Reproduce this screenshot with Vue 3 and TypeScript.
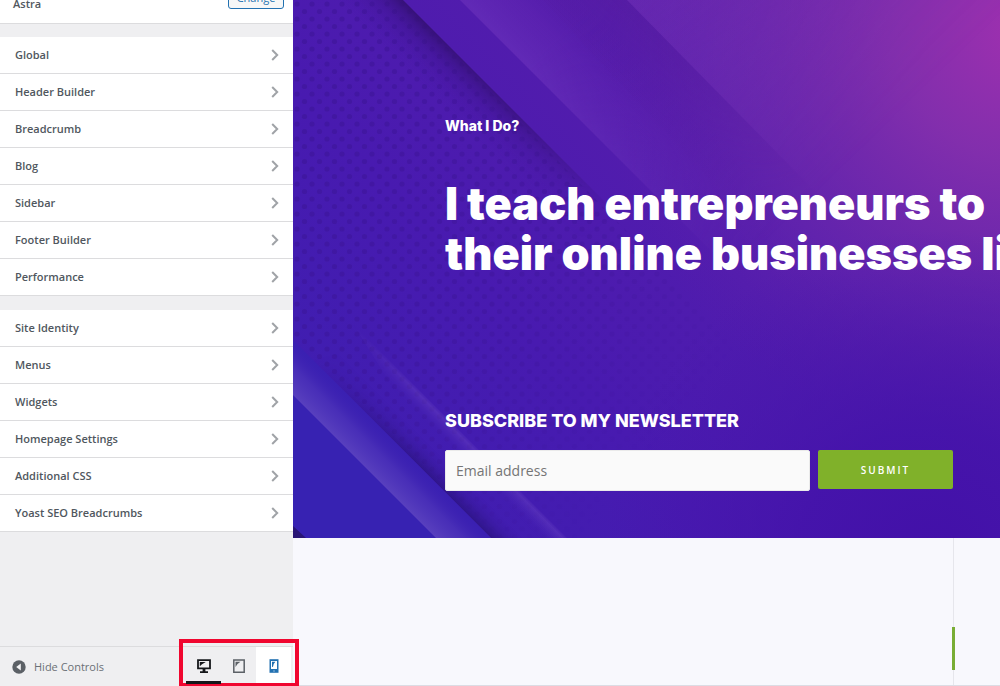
<script setup lang="ts">
import { ref } from 'vue'

const groups: string[][] = [
  ['Global', 'Header Builder', 'Breadcrumb', 'Blog', 'Sidebar', 'Footer Builder', 'Performance'],
  ['Site Identity', 'Menus', 'Widgets', 'Homepage Settings', 'Additional CSS', 'Yoast SEO Breadcrumbs'],
]

const email = ref('')
</script>

<template>
  <div class="customizer">
    <aside class="sidebar">
      <header class="theme">
        <span class="theme-name">Astra</span>
        <button class="change" type="button">Change</button>
      </header>

      <nav class="panels" aria-label="Customizer sections">
        <ul v-for="(group, g) in groups" :key="g" class="group">
          <li v-for="name in group" :key="name">
            <button class="row" type="button">
              <span>{{ name }}</span>
              <svg class="chevron" viewBox="0 0 8 12" aria-hidden="true">
                <path d="M1.2 1 6.2 6l-5 5" fill="none" stroke="#a0a3a7" stroke-width="2" />
              </svg>
            </button>
          </li>
        </ul>
      </nav>

      <footer class="footer">
        <button class="collapse" type="button">
          <svg class="collapse-icon" viewBox="0 0 14 14" aria-hidden="true">
            <circle cx="7" cy="7" r="6.7" fill="#5b6066" />
            <path d="M8.8 3.6v6.8L4.2 7z" fill="#f3f3f5" />
          </svg>
          <span>Hide Controls</span>
        </button>
        <div class="devices">
          <button class="device active" type="button" aria-label="Desktop preview">
            <svg class="device-icon" viewBox="0 0 16 16" aria-hidden="true">
              <path d="M2 2.2h12v8.2H2z" fill="none" stroke="#15171a" stroke-width="1.8" />
              <path d="M3.8 4h6L6 6.2l-2.200 2z" fill="#15171a" />
              <path d="M6.600 11h2.800v2.200H12V15H4v-1.800h2.600z" fill="#15171a" />
            </svg>
          </button>
          <button class="device" type="button" aria-label="Tablet preview">
            <svg class="device-icon" viewBox="0 0 16 16" aria-hidden="true">
              <path d="M2.800 2h10.400v12.200H2.800z" fill="none" stroke="#5b6066" stroke-width="1.500" />
              <path d="M4.500 3.800h5L6.500 6l-2 3z" fill="#5b6066" />
            </svg>
          </button>
          <button class="device hover" type="button" aria-label="Mobile preview">
            <svg class="device-icon" viewBox="0 0 16 16" aria-hidden="true">
              <path d="M3.500 1.200h9v13.600h-9z" fill="#2271b1" />
              <path d="M5 3h6v8H5z" fill="#fff" />
              <path d="M6 3.800h3.400L7.700 6 7 8.800 6 9z" fill="#2271b1" />
              <path d="M7 12.600h2v1H7z" fill="#8bb6dc" />
            </svg>
          </button>
          <div class="highlight" aria-hidden="true"></div>
        </div>
      </footer>
    </aside>

    <main class="preview">
      <section class="hero">
        <svg class="art" viewBox="0 0 707 538" preserveAspectRatio="xMinYMin slice" aria-hidden="true">
          <defs>
            <linearGradient id="base" gradientUnits="userSpaceOnUse" x1="0" y1="538" x2="560" y2="0">
              <stop offset="0" stop-color="#3a20b1" />
              <stop offset="0.400" stop-color="#481ab0" />
              <stop offset="1" stop-color="#5e1fa9" />
            </linearGradient>
            <radialGradient id="glow" gradientUnits="userSpaceOnUse" cx="730" cy="30" r="430">
              <stop offset="0" stop-color="#9f30af" />
              <stop offset="0.300" stop-color="#8630ad" stop-opacity="0.900" />
              <stop offset="0.700" stop-color="#702bae" stop-opacity="0.400" />
              <stop offset="1" stop-color="#5a1cab" stop-opacity="0" />
            </radialGradient>
            <radialGradient id="low" gradientUnits="userSpaceOnUse" cx="640" cy="560" r="330">
              <stop offset="0" stop-color="#4210a8" />
              <stop offset="0.400" stop-color="#4312aa" stop-opacity="0.800" />
              <stop offset="1" stop-color="#4615ac" stop-opacity="0" />
            </radialGradient>
            <pattern id="dots" width="15" height="15" patternUnits="userSpaceOnUse">
              <circle cx="4" cy="4" r="2.600" fill="#38128c" />
              <circle cx="11.500" cy="11.500" r="2.600" fill="#38128c" />
            </pattern>
            <linearGradient id="dotFade" gradientUnits="userSpaceOnUse" x1="60" y1="120" x2="400" y2="400">
              <stop offset="0" stop-color="#fff" stop-opacity="0.380" />
              <stop offset="0.500" stop-color="#fff" stop-opacity="0.280" />
              <stop offset="1" stop-color="#fff" stop-opacity="0" />
            </linearGradient>
            <mask id="dotMask"><rect width="707" height="538" fill="url(#dotFade)" /></mask>
            <linearGradient id="shade" gradientUnits="userSpaceOnUse" x1="180" y1="70" x2="148" y2="102">
              <stop offset="0" stop-color="#32106f" stop-opacity="0.850" />
              <stop offset="0.400" stop-color="#3a1288" stop-opacity="0.400" />
              <stop offset="1" stop-color="#4517a5" stop-opacity="0" />
            </linearGradient>
            <linearGradient id="along" gradientUnits="userSpaceOnUse" x1="130" y1="20" x2="320" y2="215">
              <stop offset="0" stop-color="#fff" />
              <stop offset="0.500" stop-color="#fff" stop-opacity="0.700" />
              <stop offset="1" stop-color="#fff" stop-opacity="0" />
            </linearGradient>
            <mask id="alongMask"><rect width="707" height="538" fill="url(#along)" /></mask>
            <linearGradient id="bandA" gradientUnits="userSpaceOnUse" x1="217" y1="50" x2="277" y2="-10">
              <stop offset="0" stop-color="#7b3fc4" stop-opacity="0.400" />
              <stop offset="0.500" stop-color="#6c2db8" stop-opacity="0.300" />
              <stop offset="1" stop-color="#5a1ca3" stop-opacity="0" />
            </linearGradient>
            <linearGradient id="bandB" gradientUnits="userSpaceOnUse" x1="384" y1="50" x2="324" y2="110">
              <stop offset="0" stop-color="#541b9c" stop-opacity="0.500" />
              <stop offset="1" stop-color="#561ba2" stop-opacity="0" />
            </linearGradient>
            <linearGradient id="bandC" gradientUnits="userSpaceOnUse" x1="384" y1="50" x2="520" y2="-80">
              <stop offset="0" stop-color="#8440bc" stop-opacity="0.320" />
              <stop offset="1" stop-color="#8737b4" stop-opacity="0.200" />
            </linearGradient>
            <linearGradient id="fade" gradientUnits="userSpaceOnUse" x1="300" y1="0" x2="540" y2="250">
              <stop offset="0" stop-color="#fff" />
              <stop offset="0.400" stop-color="#fff" stop-opacity="0.600" />
              <stop offset="0.850" stop-color="#fff" stop-opacity="0" />
            </linearGradient>
            <mask id="fadeMask"><rect width="707" height="538" fill="url(#fade)" /></mask>
            <linearGradient id="ray" gradientUnits="userSpaceOnUse" x1="72" y1="467" x2="100" y2="439">
              <stop offset="0" stop-color="#654dc3" stop-opacity="0.700" />
              <stop offset="0.500" stop-color="#5a40be" stop-opacity="0.450" />
              <stop offset="1" stop-color="#3d1fb0" stop-opacity="0" />
            </linearGradient>
            <linearGradient id="rayShade" gradientUnits="userSpaceOnUse" x1="110" y1="450" x2="126" y2="434">
              <stop offset="0" stop-color="#241070" stop-opacity="0.600" />
              <stop offset="1" stop-color="#3a1aa0" stop-opacity="0" />
            </linearGradient>
            <linearGradient id="rayAlong" gradientUnits="userSpaceOnUse" x1="20" y1="360" x2="130" y2="470">
              <stop offset="0" stop-color="#fff" stop-opacity="0" />
              <stop offset="1" stop-color="#fff" />
            </linearGradient>
            <mask id="rayMask"><rect width="707" height="538" fill="url(#rayAlong)" /></mask>
            <linearGradient id="thin" gradientUnits="userSpaceOnUse" x1="148" y1="440" x2="162" y2="426">
              <stop offset="0" stop-color="#3f1bb0" stop-opacity="0" />
              <stop offset="0.850" stop-color="#7650cc" stop-opacity="0.340" />
              <stop offset="1" stop-color="#6a40c4" stop-opacity="0.160" />
            </linearGradient>
            <linearGradient id="thinAlong" gradientUnits="userSpaceOnUse" x1="55" y1="325" x2="125" y2="395">
              <stop offset="0" stop-color="#fff" stop-opacity="0" />
              <stop offset="1" stop-color="#fff" />
            </linearGradient>
            <mask id="thinMask"><rect width="707" height="538" fill="url(#thinAlong)" /></mask>
          </defs>
          <rect width="707" height="538" fill="url(#base)" />
          <rect width="707" height="538" fill="url(#glow)" />
          <rect width="707" height="538" fill="url(#low)" />
          <path d="M0 0H108L430 330 640 538H0z" fill="url(#dots)" mask="url(#dotMask)" />
          <path d="M40 0H110L330 220 290 260z" fill="url(#shade)" mask="url(#alongMask)" />
          <g mask="url(#fadeMask)">
            <path d="M167 0H334L560 240 430 263z" fill="url(#bandA)" />
            <path d="M250 0H334L600 270 510 280z" fill="url(#bandB)" />
            <path d="M334 0H707V380z" fill="url(#bandC)" />
          </g>
          <path d="M60 324 274 538H228L120 420z" fill="url(#thin)" mask="url(#thinMask)" />
          <path d="M20 360 198 538H250L60 350z" fill="url(#rayShade)" mask="url(#rayMask)" />
          <path d="M0 340 198 538H0z" fill="#3a20b2" />
          <path d="M0 395 143 538H0z" fill="#3722b2" />
          <path d="M0 395V340L198 538H143z" fill="url(#ray)" />
          <path d="M0 526 13 538H0z" fill="#291575" />
        </svg>
        <div class="content">
          <p class="eyebrow">What I Do?</p>
          <h1 class="headline">I teach entrepreneurs to<br />their online businesses li</h1>
          <h2 class="subscribe">SUBSCRIBE TO MY NEWSLETTER</h2>
          <form class="form" @submit.prevent>
            <input v-model="email" class="email" type="email" placeholder="Email address" aria-label="Email address" />
            <button class="submit" type="submit">SUBMIT</button>
          </form>
        </div>
      </section>
      <section class="below">
        <div class="column"><span class="marker"></span></div>
      </section>
    </main>
  </div>
</template>

<style>
body {
  margin: 0;
}
</style>

<style scoped>
.customizer {
  display: flex;
  min-height: 100vh;
  overflow: hidden;
  font-family: "Open Sans", "Noto Sans", sans-serif;
  background: #f8f8fd;
}

button {
  font-family: inherit;
  cursor: pointer;
}

.sidebar {
  display: flex;
  flex-direction: column;
  flex: none;
  box-sizing: border-box;
  width: 18%;
  min-width: 293px;
  background: #efeff1;
  color: #50575e;
}

.theme {
  display: flex;
  align-items: flex-end;
  justify-content: space-between;
  box-sizing: border-box;
  height: 24px;
  padding: 0 9px 14px 13px;
  overflow: hidden;
  background: #fff;
  border-bottom: 1px solid #dcdcde;
}

.theme-name {
  font-size: 11px;
  line-height: 18px;
  font-weight: 600;
  margin-bottom: -4px;
}

.change {
  flex: none;
  width: 56px;
  height: 22px;
  padding: 0;
  font-size: 11px;
  line-height: 20px;
  color: #2271b1;
  background: #f6f7f7;
  border: 1px solid #2271b1;
  border-radius: 3px;
}

.panels {
  display: flex;
  flex-direction: column;
  gap: 14px;
  padding-top: 13px;
}

.group {
  margin: 0;
  padding: 0;
  list-style: none;
  background: #fff;
}

.row {
  display: flex;
  align-items: center;
  justify-content: space-between;
  width: 100%;
  height: 37px;
  padding: 0 14px 0 15px;
  font-size: 11px;
  font-weight: 600;
  line-height: 18px;
  color: #50575e;
  text-align: left;
  background: #fff;
  border: 0;
  border-bottom: 1px solid #dcdcde;
}

.chevron {
  width: 8px;
  height: 12px;
}

.footer {
  display: flex;
  justify-content: space-between;
  height: 39px;
  margin-top: auto;
  border-top: 1px solid #dcdcde;
}

.collapse {
  display: flex;
  align-items: center;
  gap: 8px;
  padding: 0 0 0 12px;
  font-size: 11px;
  color: #6b7076;
  background: none;
  border: 0;
}

.collapse-icon {
  width: 14px;
  height: 14px;
}

.devices {
  position: relative;
  display: flex;
  padding: 0 2px 2px 0;
}

.device {
  display: flex;
  align-items: center;
  justify-content: center;
  box-sizing: border-box;
  width: 35px;
  padding: 4px 0 0;
  background: none;
  border: 0;
  border-bottom: 3px solid transparent;
}

.device.active {
  position: relative;
  z-index: 1;
  border-bottom-color: #15171a;
}

.device.hover {
  background: #fff;
}

.device-icon {
  width: 16px;
  height: 16px;
}

.highlight {
  position: absolute;
  inset: -8px -6px -1px -7px;
  border: 4px solid #f0062f;
  pointer-events: none;
}

.preview {
  display: flex;
  flex: 1;
  flex-direction: column;
  min-width: 0;
  border-bottom: 1px solid #dcdce4;
}

.hero {
  position: relative;
  overflow: hidden;
  background: #4a19ae;
}

.art {
  position: absolute;
  inset: 0;
  width: 100%;
  height: 100%;
}

.content {
  position: relative;
  padding: 116px 47px 47px 152px;
  color: #fff;
  font-family: Inter, "Open Sans", sans-serif;
}

.eyebrow {
  margin: 0;
  font-size: 14px;
  line-height: 20px;
  font-weight: 800;
}

.headline {
  margin: 43px 0 0;
  font-size: 45px;
  line-height: 50px;
  font-weight: 900;
  white-space: nowrap;
}

.subscribe {
  margin: 130px 0 0;
  font-size: 18px;
  line-height: 24px;
  font-weight: 800;
  white-space: nowrap;
}

.form {
  display: flex;
  align-items: flex-start;
  gap: 8px;
  margin-top: 17px;
}

.email {
  flex: 1;
  box-sizing: border-box;
  min-width: 0;
  height: 41px;
  padding: 0 10px;
  font-family: "Open Sans", sans-serif;
  font-size: 14px;
  color: #333;
  background: #fafafa;
  border: 1px solid #eaeaea;
  border-radius: 2px;
}

.email::placeholder {
  color: #757575;
  opacity: 1;
}

.submit {
  flex: none;
  width: 135px;
  height: 39px;
  padding: 0;
  font-family: "Open Sans", sans-serif;
  font-size: 10px;
  font-weight: 600;
  letter-spacing: 2px;
  color: #fff;
  background: #80b12a;
  border: 0;
  border-radius: 2px;
}

.below {
  display: flex;
  flex: 1;
  min-height: 146px;
  padding-right: 46px;
}

.column {
  display: flex;
  flex: 1;
  align-items: flex-end;
  justify-content: flex-end;
  box-sizing: border-box;
  padding-bottom: 15px;
  border-right: 1px solid #e6e6ec;
}

.marker {
  width: 3px;
  height: 43px;
  margin-right: -2px;
  background: #79ad35;
}
</style>
